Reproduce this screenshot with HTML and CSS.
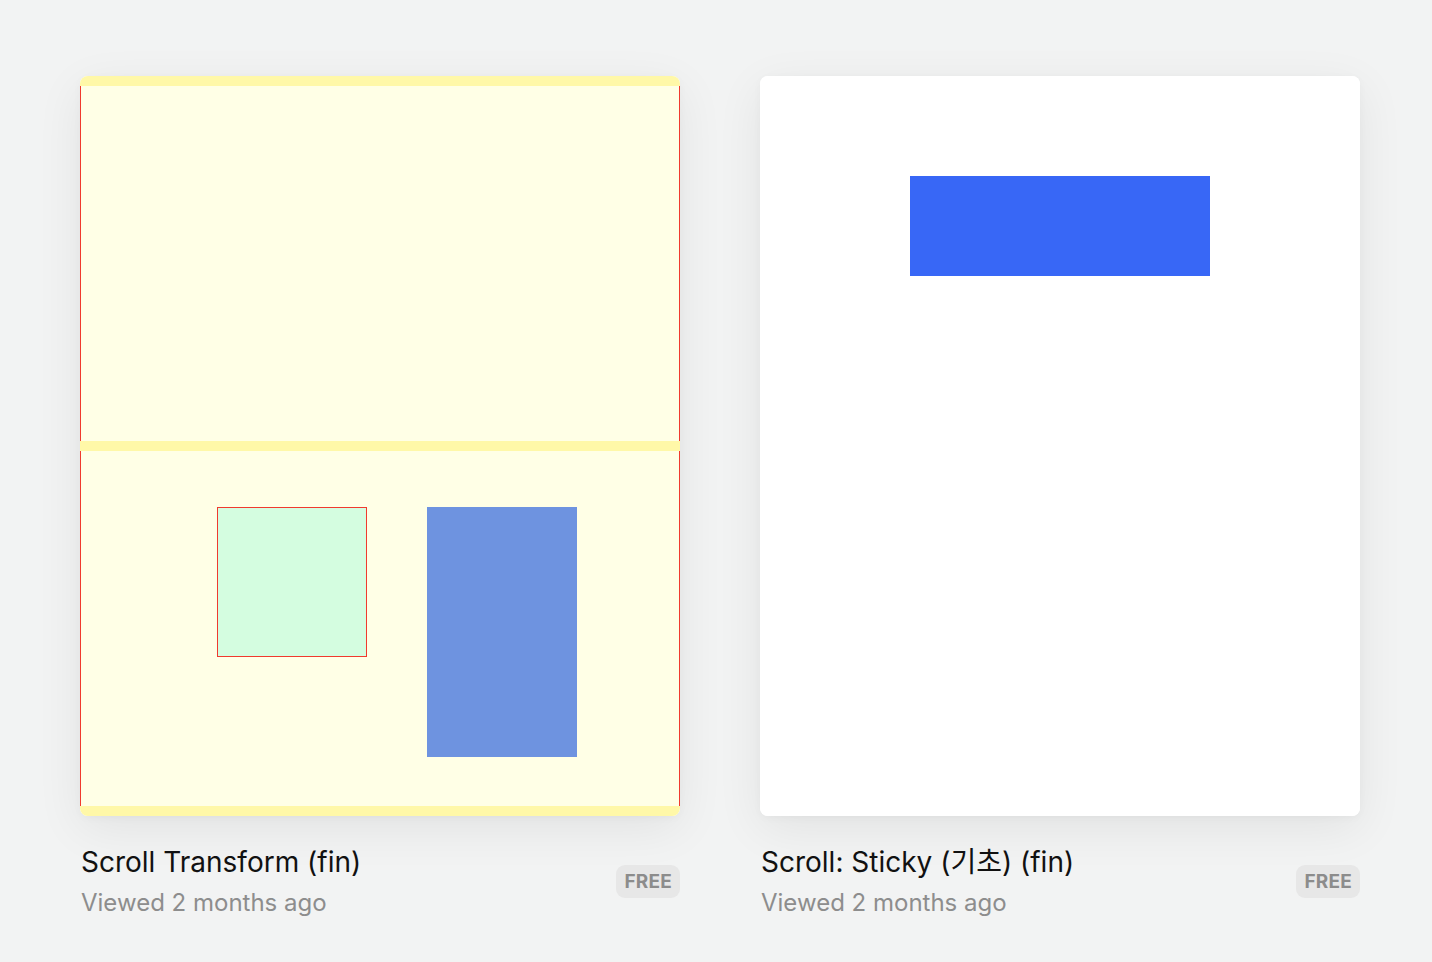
FILE: index.html
```html
<!DOCTYPE html>
<html lang="en">
<head>
<meta charset="utf-8">
<title>Projects</title>
<link rel="stylesheet" href="styles.css">
</head>
<body>
<main class="grid">
  <article class="item">
    <div class="card">
      <div class="preview-transform">
        <div class="band"></div>
        <div class="section"></div>
        <div class="band"></div>
        <div class="section section-boxes">
          <div class="box-green"></div>
          <div class="box-blue"></div>
        </div>
        <div class="band"></div>
      </div>
    </div>
    <div class="info">
      <div class="texts">
        <h2 class="title">Scroll Transform (fin)</h2>
        <p class="meta">Viewed 2 months ago</p>
      </div>
      <span class="badge">FREE</span>
    </div>
  </article>
  <article class="item">
    <div class="card">
      <div class="preview-sticky">
        <div class="sticky-box"></div>
      </div>
    </div>
    <div class="info">
      <div class="texts">
        <h2 class="title">Scroll: Sticky (기초) (fin)</h2>
        <p class="meta">Viewed 2 months ago</p>
      </div>
      <span class="badge">FREE</span>
    </div>
  </article>
</main>
</body>
</html>
```
FILE: styles.css
```css
* { box-sizing: border-box; }
html, body { margin: 0; padding: 0; }
body {
  background: #f2f3f3;
  font-family: Inter, "Noto Sans CJK KR", sans-serif;
  width: 1432px;
  height: 962px;
  overflow: hidden;
}
.grid {
  display: grid;
  grid-template-columns: 600px 600px;
  column-gap: 80px;
  padding: 76px 0 0 80px;
}
.card {
  width: 600px;
  height: 740px;
  border-radius: 8px;
  overflow: hidden;
  background: #fff;
  box-shadow: 0 12px 48px rgba(0, 0, 0, 0.07), 0 2px 8px rgba(0, 0, 0, 0.03);
}
.preview-transform {
  display: flex;
  flex-direction: column;
  height: 100%;
  background: #ffffe6;
}
.band {
  height: 10px;
  background: #fff8a8;
  flex: none;
}
.section {
  height: 355px;
  border-left: 1px solid #f03a2e;
  border-right: 1px solid #f03a2e;
  flex: none;
}
.section-boxes {
  display: flex;
  align-items: flex-start;
  padding: 56px 0 0 136px;
  gap: 60px;
}
.box-green {
  width: 150px;
  height: 150px;
  background: #d4fde0;
  border: 1px solid #f03a2e;
}
.box-blue {
  width: 150px;
  height: 250px;
  background: #6e93e0;
}
.preview-sticky {
  height: 100%;
  background: #fff;
  padding: 100px 0 0 150px;
}
.sticky-box {
  width: 300px;
  height: 100px;
  background: #3867f6;
}
.info {
  display: flex;
  justify-content: space-between;
  align-items: center;
  padding-top: 28px;
  padding-left: 1px;
}
.title {
  margin: 0;
  font-size: 28px;
  font-weight: 400;
  line-height: 36px;
  color: #111;
}
.meta {
  margin: 8px 0 0;
  font-size: 24px;
  line-height: 30px;
  color: #8d8d8d;
}
.badge {
  background: #e7e7e7;
  color: #8c8c8c;
  font-weight: 700;
  font-size: 19px;
  line-height: 33px;
  height: 33px;
  padding: 0 8px;
  border-radius: 9px;
  letter-spacing: 0.2px;
}
```
